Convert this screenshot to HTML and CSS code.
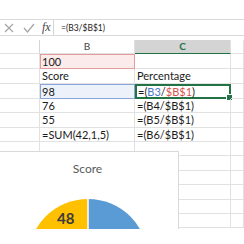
FILE: index.html
```html
<!DOCTYPE html>
<html lang="en">
<head>
    <meta charset="UTF-8">
    <title>Score sheet</title>
    <link rel="stylesheet" href="styles.css">
</head>
<body>
    <div class="page">
        <div class="fbar">
            <div class="fbtns">
                <svg class="ico" width="12" height="12" viewBox="0 0 12 12"><path d="M2 2 L10 10 M10 2 L2 10" stroke="#a6a6a6" stroke-width="1.2" fill="none"/></svg>
                <svg class="ico" width="14" height="12" viewBox="0 0 14 12"><path d="M2 6 L5.5 10 L12 2" stroke="#a6a6a6" stroke-width="1.3" fill="none"/></svg>
                <span class="fx">fx</span>
            </div>
            <div class="ftext">=(B3/$B$1)</div>
        </div>

        <div class="sheet">
            <div class="grid">
                <div class="cell corner"></div>
                <div class="cell colhead">B</div>
                <div class="cell colhead sel">C</div>
                <div class="cell colhead"></div>

                <div class="cell"></div>
                <div class="cell ref-red">100</div>
                <div class="cell"></div>
                <div class="cell"></div>

                <div class="cell"></div>
                <div class="cell">Score</div>
                <div class="cell">Percentage</div>
                <div class="cell"></div>

                <div class="cell"></div>
                <div class="cell ref-blue">98</div>
                <div class="cell active">=(<span class="b">B3</span>/<span class="r">$B$1</span>)</div>
                <div class="cell"></div>

                <div class="cell"></div>
                <div class="cell">76</div>
                <div class="cell">=(B4/$B$1)</div>
                <div class="cell"></div>

                <div class="cell"></div>
                <div class="cell">55</div>
                <div class="cell">=(B5/$B$1)</div>
                <div class="cell"></div>

                <div class="cell"></div>
                <div class="cell">=SUM(42,1,5)</div>
                <div class="cell">=(B6/$B$1)</div>
                <div class="cell"></div>

                <div class="cell"></div><div class="cell"></div><div class="cell"></div><div class="cell"></div>
                <div class="cell"></div><div class="cell"></div><div class="cell"></div><div class="cell"></div>
                <div class="cell"></div><div class="cell"></div><div class="cell"></div><div class="cell"></div>
                <div class="cell"></div><div class="cell"></div><div class="cell"></div><div class="cell"></div>
                <div class="cell"></div><div class="cell"></div><div class="cell"></div><div class="cell"></div>
                <div class="cell"></div><div class="cell"></div><div class="cell"></div><div class="cell"></div>
            </div>

            <div class="chart">
                <div class="chart-title">Score</div>
                <svg class="pie" width="178" height="77" viewBox="0 0 178 77">
                    <path d="M88 107 L88 47 A60 60 0 0 0 28 107 Z" fill="#ffc000"/>
                    <path d="M88 107 L88 47 A60 60 0 0 1 148 107 Z" fill="#5b9bd5"/>
                    <line x1="88" y1="46" x2="88" y2="107" stroke="#fff" stroke-width="1.5"/>
                </svg>
                <div class="pie-label">48</div>
            </div>
        </div>
    </div>
</body>
</html>
```

FILE: styles.css
```css
body {
    margin: 0;
    background: #ffffff;
    font-family: Lato, "Open Sans", Arial, sans-serif;
    color: #1a1a1a;
    overflow: hidden;
}

.page {
    width: 244px;
    height: 244px;
    padding-top: 19px;
    box-sizing: border-box;
}

/* formula bar */
.fbar {
    display: flex;
    align-items: center;
    height: 15px;
    border-top: 1px solid #dadada;
    border-bottom: 1px solid #dadada;
}

.fbtns {
    display: flex;
    align-items: center;
    gap: 7px;
    width: 50px;
    padding-left: 3px;
    height: 100%;
    border-right: 1px solid #d4d4d4;
}

.ico {
    display: block;
}

.fx {
    font-family: "Liberation Serif", serif;
    font-style: italic;
    font-size: 12px;
    color: #444;
    margin-left: -1px;
}

.ftext {
    padding-left: 7px;
    font-size: 8.5px;
    color: #222;
}

/* sheet */
.sheet {
    position: relative;
    margin-top: 4px;
    height: 189px;
    overflow: hidden;
}

.grid {
    display: grid;
    grid-template-columns: 40px 95px 96px 1fr;
    grid-template-rows: 14px 15px 15px 15px 14px 15px 14px 14px 15px 14px 15px 14px 14px;
}

.cell {
    box-sizing: border-box;
    border-right: 1px solid #e1e1e1;
    border-bottom: 1px solid #e1e1e1;
    font-size: 11px;
    line-height: 14px;
    padding-left: 2px;
    white-space: nowrap;
    overflow: visible;
    position: relative;
}

.corner {
    border-right: 1px solid #d4d4d4;
}

.colhead {
    text-align: center;
    padding-left: 0;
    font-size: 10px;
    color: #444;
    line-height: 13px;
}

.colhead.sel {
    background: #d4d4d4;
    color: #217346;
    font-weight: bold;
    border-bottom: 1px solid #217346;
}

.ref-red {
    background: #fcebeb;
    border: 1px solid #e49b9b;
    padding-left: 1px;
    line-height: 13px;
}

.ref-blue {
    background: #edf2fa;
    border: 1px solid #8aa6d8;
    padding-left: 1px;
    line-height: 13px;
}

.active {
    border: 2px solid #217346;
    line-height: 11px;
    padding-left: 1px;
}

.active::after {
    content: "";
    position: absolute;
    right: -4px;
    bottom: -4px;
    width: 5px;
    height: 5px;
    background: #217346;
    border: 1px solid #fff;
}

.b {
    color: #4a78c8;
}

.r {
    color: #d9534f;
}

/* chart overlay */
.chart {
    position: absolute;
    left: 0;
    top: 111px;
    width: 179px;
    height: 78px;
    box-sizing: border-box;
    background: #ffffff;
    border-top: 1px solid #d9d9d9;
    border-right: 1px solid #d9d9d9;
    overflow: hidden;
}

.chart-title {
    text-align: center;
    padding-top: 9px;
    padding-right: 3px;
    font-size: 12px;
    color: #595959;
}

.pie {
    position: absolute;
    left: 0;
    top: 0;
}

.pie-label {
    position: absolute;
    left: 57px;
    top: 58px;
    font-size: 15px;
    line-height: 17px;
    font-weight: bold;
    color: #3b3b3b;
}
```
